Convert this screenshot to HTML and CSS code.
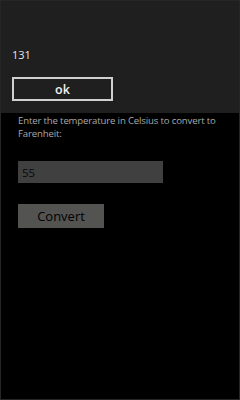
FILE: index.html
```html
<!DOCTYPE html>
<html lang="en">
<head>
  <meta charset="UTF-8">
  <title>Celsius Converter</title>
  <meta name="viewport" content="width=device-width, initial-scale=1.0">
  <link rel="stylesheet" href="styles.css">
</head>
<body>

<div class="screen">
  <!-- MESSAGE DIALOG -->
  <div class="dialog">
    <div class="dialog-text">131</div>
    <button class="ok-btn">ok</button>
  </div>

  <!-- CONVERTER -->
  <div class="content">
    <p class="prompt">Enter the temperature in Celsius to convert to Farenheit:</p>
    <input type="text" class="temp-input" value="55">
    <button class="convert-btn">Convert</button>
  </div>
</div>

</body>
</html>
```

FILE: styles.css
```css
body {
  margin: 0;
  background: #000;
  font-family: "Open Sans", "Noto Sans", sans-serif;
}

.screen {
  width: 240px;
  height: 400px;
  box-sizing: border-box;
  border: 1px solid #262626;
  background: #000;
}

.dialog {
  background: #1f1f1f;
  height: 112px;
  padding: 46px 11px 0;
  box-sizing: border-box;
}

.dialog-text {
  color: #e6e6e6;
  font-size: 11px;
  line-height: 15px;
}

.ok-btn {
  display: block;
  margin-top: 15px;
  width: 101px;
  height: 24px;
  background: transparent;
  border: 2px solid #d0d0d0;
  color: #f0f0f0;
  font-family: inherit;
  font-size: 12.5px;
  font-weight: 600;
  padding: 0;
}

.content {
  padding: 1px 10px 0 17px;
}

.prompt {
  margin: 0;
  color: #a8a8a8;
  font-size: 9.6px;
  line-height: 13px;
  letter-spacing: -0.15px;
}

.temp-input {
  display: block;
  margin-top: 21px;
  width: 145px;
  height: 22px;
  box-sizing: border-box;
  border: none;
  background: #404040;
  color: #0a0a0a;
  font-family: inherit;
  font-size: 11.5px;
  padding: 0 4px;
  outline: none;
}

.convert-btn {
  display: block;
  margin-top: 21px;
  width: 86px;
  height: 24px;
  border: none;
  background: #535452;
  color: #000;
  font-family: inherit;
  font-size: 13px;
  font-weight: 500;
  padding: 0;
}
```
